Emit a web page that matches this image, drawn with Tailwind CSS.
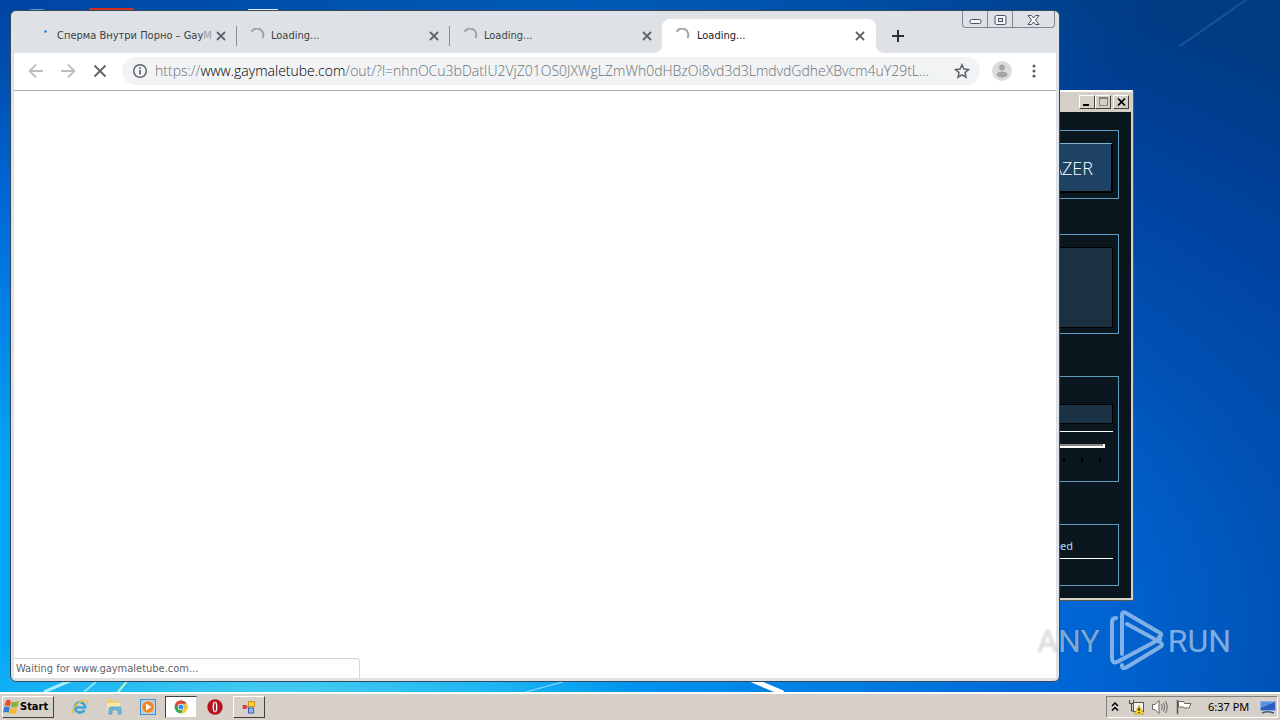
<!DOCTYPE html>
<html lang="en">
<head>
    <meta charset="UTF-8">
    <meta name="viewport" content="width=device-width, initial-scale=1.0">
    <title>Desktop</title>
    <script src="https://cdn.jsdelivr.net/npm/@tailwindcss/browser@4"></script>
</head>
<body class="h-screen overflow-hidden flex flex-col font-['Noto_Sans','Open_Sans',sans-serif] text-[11px] leading-4 text-black">

    <!-- Desktop -->
    <div class="relative flex-1 overflow-hidden bg-[radial-gradient(ellipse_28%_14%_at_22%_102%,#4fd2f0_0%,#30c0f0cc_50%,transparent_100%),radial-gradient(ellipse_45%_30%_at_45%_0%,#005cb8_0%,transparent_100%),radial-gradient(ellipse_130%_110%_at_10%_90%,#00a8f8_0%,#00a4f5_23%,#0080e4_42%,#0066d6_57%,#0052b4_70%,#0042a0_84%,#003c84_100%)]">
        <svg class="absolute inset-0 w-full h-full" viewBox="0 0 1280 692" preserveAspectRatio="none" aria-hidden="true">
            <ellipse cx="37" cy="13" rx="14" ry="4" fill="#7fa6d8"/>
            <rect x="89" y="8" width="45" height="8" fill="#d0301c"/>
            <rect x="248" y="9" width="30" height="6" fill="#e8eef8"/>
            <path d="M1180 46 1246 0" stroke="#3a78b8" stroke-width="2" opacity=".4"/>
            <path d="M44 692 72 680" stroke="#a8ecff" stroke-width="3"/>
            <path d="M84 692 98 680" stroke="#8ce4f8" stroke-width="2"/>
            <path d="M118 692 128 680" stroke="#b8f4c8" stroke-width="2"/>
            <path d="M526 692 566 681" stroke="#9fdcff" stroke-width="1"/>
            <path d="M752 680 783 693" stroke="#fff" stroke-width="5"/>
        </svg>

        <!-- Background app -->
        <section class="absolute top-[90px] right-[147px] w-[420px] border-2 border-t-white border-l-white border-r-[#d8d0c4] border-b-[#d8d0c4] bg-[#d4d0c8] shadow-[1px_1px_0_#5a5650]">
            <header class="flex items-center justify-end h-5 pr-[2px] pb-px">
                <button aria-label="Minimize" class="w-4 h-[14px] border border-t-white border-l-white border-r-[#404040] border-b-[#404040] flex items-end pl-[3px] pb-[2px]"><span class="w-[6px] h-[2px] bg-black"></span></button>
                <button aria-label="Maximize" class="w-4 h-[14px] border border-t-white border-l-white border-r-[#404040] border-b-[#404040] flex items-center justify-center"><span class="w-[9px] h-[9px] border border-t-2 border-[#85817a]"></span></button>
                <button aria-label="Close" class="w-4 h-[14px] ml-[2px] border border-t-white border-l-white border-r-[#404040] border-b-[#404040] flex items-center justify-center">
                    <svg width="9" height="8" viewBox="0 0 9 8"><path d="M1 .5 8 7.500M8 .5 1 7.500" stroke="#000" stroke-width="1.700"/></svg>
                </button>
            </header>
            <div class="bg-[#0b171e] pt-[18px] pr-3 pb-3">
                <div class="border border-[#5f9cc0] h-[69px] pt-3 pr-[5px] mb-[35px]">
                    <button class="block w-full h-[50px] bg-[#1e4263] border border-t-[#7fb4d4] border-r-2 border-b-2 border-r-black border-b-black text-right pr-[18px] text-[18px] font-light text-white font-['Open_Sans',sans-serif]">LAZER</button>
                </div>
                <div class="border border-[#5f9cc0] h-[100px] pt-3 pr-[5px] mb-[42px]">
                    <div class="h-[81px] bg-[#1b3040] border border-black"></div>
                </div>
                <div class="border border-[#5f9cc0] h-[106px] pt-[27px] pr-[5px] mb-[42px]">
                    <div class="h-5 bg-[#1a3244] border border-black"></div>
                    <div class="h-px bg-white mt-[7px]"></div>
                    <div class="h-1 mr-2 mt-3 bg-[#8a857e] border-b-2 border-r-2 border-white"></div>
                    <div class="flex justify-end gap-4 pr-3 mt-[10px]">
                        <span class="w-[2px] h-1 bg-black"></span>
                        <span class="w-[2px] h-1 bg-black"></span>
                        <span class="w-[2px] h-1 bg-black"></span>
                    </div>
                </div>
                <div class="border border-[#5f9cc0] h-[62px] pt-[13px] pr-[5px]">
                    <p class="text-right pr-10 text-[#b4dcec]">ed</p>
                    <div class="h-px bg-white mt-1"></div>
                </div>
            </div>
        </section>

        <!-- Browser -->
        <main class="absolute top-[10px] left-[10px] right-[220px] bottom-[10px] flex flex-col rounded-md border border-[#34485c] bg-[#dee1e6] px-[3px] pb-[3px] overflow-hidden">
            <div class="flex h-[42px] pl-[9px] shrink-0 font-['DejaVu_Sans_Condensed','DejaVu_Sans',sans-serif] text-[11px]">
                <div class="flex items-center w-[213px] mt-2 pl-3 pr-[7px]">
                    <svg class="w-4 h-4 shrink-0" viewBox="0 0 16 16"><circle cx="10.500" cy="3.500" r="1.200" fill="#1a73e8"/></svg>
                    <span class="flex-1 ml-[6px] whitespace-nowrap text-[#3c4043]">Сперма Внутри Порно – Gay<span class="text-[#9a9da3]">M</span></span>
                    <button aria-label="Close tab"><svg class="w-4 h-4" viewBox="0 0 16 16"><path d="m4 4 8 8M12 4l-8 8" stroke="#5f6368" stroke-width="1.800"/></svg></button>
                </div>
                <div class="self-center h-5 w-px mt-2 bg-[#8b8f94]"></div>
                <div class="flex items-center w-[212px] mt-2 pl-3 pr-[7px]">
                    <svg class="w-4 h-4 shrink-0" viewBox="0 0 16 16"><path d="M2.500 3.700A6 6 0 0 1 13.500 10" fill="none" stroke="#a0a4aa" stroke-width="2"/></svg>
                    <span class="flex-1 ml-[6px] text-[#3c4043]">Loading...</span>
                    <button aria-label="Close tab"><svg class="w-4 h-4" viewBox="0 0 16 16"><path d="m4 4 8 8M12 4l-8 8" stroke="#5f6368" stroke-width="1.800"/></svg></button>
                </div>
                <div class="self-center h-5 w-px mt-2 bg-[#8b8f94]"></div>
                <div class="flex items-center w-[212px] mt-2 pl-3 pr-[7px]">
                    <svg class="w-4 h-4 shrink-0" viewBox="0 0 16 16"><path d="M2.500 3.700A6 6 0 0 1 13.500 10" fill="none" stroke="#a0a4aa" stroke-width="2"/></svg>
                    <span class="flex-1 ml-[6px] text-[#3c4043]">Loading...</span>
                    <button aria-label="Close tab"><svg class="w-4 h-4" viewBox="0 0 16 16"><path d="m4 4 8 8M12 4l-8 8" stroke="#5f6368" stroke-width="1.800"/></svg></button>
                </div>
                <div class="relative flex items-center w-[214px] mt-2 pl-3 pr-2 rounded-t-lg bg-white">
                    <svg class="absolute -left-2 bottom-0 w-2 h-2" viewBox="0 0 8 8"><path d="M8 0v8H0a8 8 0 0 0 8-8" fill="#fff"/></svg>
                    <svg class="absolute -right-2 bottom-0 w-2 h-2" viewBox="0 0 8 8"><path d="M0 0v8h8a8 8 0 0 1-8-8" fill="#fff"/></svg>
                    <svg class="w-4 h-4 shrink-0" viewBox="0 0 16 16"><path d="M2.500 3.700A6 6 0 0 1 13.500 10" fill="none" stroke="#a0a4aa" stroke-width="2"/></svg>
                    <span class="flex-1 ml-[7px] text-[#202124]">Loading...</span>
                    <button aria-label="Close tab"><svg class="w-4 h-4" viewBox="0 0 16 16"><path d="m4 4 8 8M12 4l-8 8" stroke="#5f6368" stroke-width="1.800"/></svg></button>
                </div>
                <button aria-label="New tab" class="mt-2 ml-[14px]"><svg class="w-4 h-4" viewBox="0 0 16 16"><path d="M8 2v12M2 8h12" stroke="#2d3034" stroke-width="2"/></svg></button>
                <div class="ml-auto mr-px flex h-[17px] w-[93px] border border-t-0 border-[#7f8793] rounded-b divide-x divide-[#7f8793]">
                    <button aria-label="Minimize" class="w-[25px] flex items-center justify-center"><svg width="13" height="15" viewBox="0 0 13 15"><rect x="1" y="7.500" width="11" height="4" rx="1.500" fill="#f4f5f7" stroke="#4a5060"/></svg></button>
                    <button aria-label="Restore" class="w-[25px] flex items-center justify-center"><svg width="13" height="15" viewBox="0 0 13 15"><rect x="1" y="3.500" width="11" height="9" rx="1.500" fill="#f4f5f7" stroke="#4a5060"/><rect x="4.500" y="6.500" width="4" height="3" fill="#dee1e6" stroke="#4a5060"/></svg></button>
                    <button aria-label="Close" class="flex-1 flex items-center justify-center"><svg width="13" height="15" viewBox="0 0 13 15"><path d="M1 3.500h3.500l2 2.500 2-2.500H12L8.500 8l3.500 4.500H8.500l-2-2.500-2 2.500H1L4.500 8z" fill="#f4f5f7" stroke="#4a5060"/></svg></button>
                </div>
            </div>

            <div class="flex items-center h-[38px] shrink-0 px-[14px] pb-px bg-white border-b border-[#a8aaad]">
                <button aria-label="Back"><svg class="w-4 h-4" viewBox="0 0 16 16"><path d="M15 8H2M8 1.500 1.700 8 8 14.500" fill="none" stroke="#babcbe" stroke-width="1.800"/></svg></button>
                <button aria-label="Forward" class="ml-4"><svg class="w-4 h-4" viewBox="0 0 16 16"><path d="M1 8h13M8 1.500 14.300 8 8 14.500" fill="none" stroke="#babcbe" stroke-width="1.800"/></svg></button>
                <button aria-label="Stop" class="ml-4"><svg class="w-4 h-4" viewBox="0 0 16 16"><path d="m2.500 2.500 11 11M13.500 2.500l-11 11" stroke="#5f6368" stroke-width="1.800"/></svg></button>
                <div class="flex flex-1 min-w-0 items-center h-7 ml-[14px] pl-[10px] pr-[10px] rounded-full bg-[#f1f3f4]">
                    <svg class="w-4 h-4 shrink-0" viewBox="0 0 16 16"><circle cx="8" cy="8" r="6.300" fill="none" stroke="#5f6368" stroke-width="1.500"/><path d="M8 7v4.500M8 4.200v1.700" stroke="#5f6368" stroke-width="1.700"/></svg>
                    <div class="flex-1 ml-[7px] overflow-hidden whitespace-nowrap text-[14px] leading-5 font-light text-[#6b7075] font-['Open_Sans','Noto_Sans',sans-serif]">https://<span class="text-black">www.gaymaletube.com</span>/out/?l=nhnOCu3bDatIU2VjZ01OS0JXWgLZmWh0dHBzOi8vd3d3LmdvdGdheXBvcm4uY29tL...</div>
                    <button aria-label="Bookmark"><svg class="w-4 h-4" viewBox="0 0 16 16"><path d="m8 1.800 1.900 4.300 4.600.4-3.500 3.100 1 4.600L8 11.800l-4 2.400 1-4.600L1.500 6.500l4.600-.4z" fill="none" stroke="#5f6368" stroke-width="1.500"/></svg></button>
                </div>
                <button aria-label="Profile" class="ml-3"><svg class="w-5 h-5" viewBox="0 0 20 20"><circle cx="10" cy="10" r="10" fill="#dcdcdc"/><circle cx="10" cy="6.500" r="2.900" fill="#a4a4a4"/><ellipse cx="10" cy="13.500" rx="5.500" ry="2.900" fill="#a4a4a4"/></svg></button>
                <button aria-label="Menu" class="ml-[14px]"><svg class="w-4 h-4" viewBox="0 0 16 16" fill="#5f6368"><circle cx="8" cy="3" r="1.600"/><circle cx="8" cy="8" r="1.600"/><circle cx="8" cy="13" r="1.600"/></svg></button>
            </div>

            <div class="flex-1 flex items-end bg-white">
                <div class="w-[346px] h-5 pt-px pl-[2px] border-t border-r border-[#d4d6d9] rounded-tr text-[#5f6368] leading-[18px] text-[11px] font-['DejaVu_Sans_Condensed','DejaVu_Sans',sans-serif]">Waiting for www.gaymaletube.com...</div>
            </div>
        </main>
    </div>

    <!-- Taskbar -->
    <footer class="flex items-center h-7 shrink-0 border-t-2 border-white bg-[#d6d0c8] px-[2px] text-[11px]">
        <button class="flex items-center gap-px h-[22px] w-[52px] border border-t-white border-l-white border-r-[#404040] border-b-[#404040] font-bold font-['DejaVu_Sans_Condensed','DejaVu_Sans',sans-serif]">
            <svg class="w-4 h-4 shrink-0" viewBox="0 0 16 16">
                <path d="M3 1.500Q5.500 0 8 2L7 7.500Q4.500 6 1.500 7z" fill="#e8502c"/>
                <path d="M8.800 2.500Q11.500 4 16 2l-1.600 5.500Q11 9.500 7.800 8z" fill="#84b83c"/>
                <path d="M1.300 8Q4.500 6.800 6.800 8.500L5.600 14Q3.500 12.200 0 13.700z" fill="#3c7ccc"/>
                <path d="M7.600 9q3 1.500 6.600-.4L12.700 14q-3 2-6.400.3z" fill="#f4b82c"/>
            </svg>
            Start
        </button>
        <nav class="flex items-center ml-[9px]">
            <button aria-label="Internet Explorer" class="w-[34px] flex justify-center">
                <svg class="w-[18px] h-[18px]" viewBox="0 0 18 18"><path d="M4.500 9.500h9.700A5.200 5.200 0 1 0 13.500 12" fill="none" stroke="#3ca4dc" stroke-width="2.600"/><path d="M2.500 15.500C-.5 12.500 6 4.500 12 2.500c3-1 5 0 4 3" fill="none" stroke="#f0c040" stroke-width="1.400"/></svg>
            </button>
            <button aria-label="Explorer" class="w-[34px] flex justify-center">
                <svg class="w-[18px] h-[18px]" viewBox="0 0 18 18"><path d="M2 1h5l1 2h6v9H2z" fill="#ecd078"/><path d="M2 5h13v8H2z" fill="#f8e8a4"/><path d="M4 16v-5q0-2 2-2h8q2 0 2 2v5h-3v-4H7v4z" fill="#6cb8e4" stroke="#4890c4" stroke-width=".7"/></svg>
            </button>
            <button aria-label="Media Player" class="w-[34px] flex justify-center">
                <svg class="w-4 h-4" viewBox="0 0 16 16"><rect x=".5" y=".5" width="15" height="15" fill="#a8d0f0" stroke="#4c8cc8"/><circle cx="8" cy="8" r="6.200" fill="#f08420" stroke="#fff" stroke-width=".5"/><path d="M6 4.500v7L11.500 8z" fill="#fff"/></svg>
            </button>
            <button aria-label="Chrome" class="w-8 h-[22px] flex items-center justify-center bg-white border border-t-[#404040] border-l-[#404040] border-r-[#d4d0c8] border-b-[#d4d0c8]">
                <svg class="w-[14px] h-[14px]" viewBox="0 0 14 14"><circle cx="7" cy="7" r="6.500" fill="#3ca852"/><path d="M1.400 3.700A6.500 6.500 0 0 1 12.600 3.700H7A3.300 3.300 0 0 0 4 8.500z" fill="#e04434"/><path d="M12.700 3.700A6.500 6.500 0 0 1 6.500 13.500L10 8.500A3.300 3.300 0 0 0 9 3.700z" fill="#fccc34"/><circle cx="7" cy="7" r="3.200" fill="#fff"/><circle cx="7" cy="7" r="2.500" fill="#4484f0"/></svg>
            </button>
            <button aria-label="Opera" class="w-[36px] flex justify-center">
                <svg class="w-4 h-4" viewBox="0 0 16 16"><circle cx="8" cy="8" r="7.700" fill="#b81420"/><ellipse cx="8" cy="8" rx="2.400" ry="5.300" fill="#fff"/><ellipse cx="8" cy="8" rx=".9" ry="4.600" fill="#901018"/></svg>
            </button>
            <button aria-label="App" class="w-8 h-[22px] flex items-center justify-center border border-t-white border-l-white border-r-[#404040] border-b-[#404040]">
                <svg class="w-[14px] h-[14px]" viewBox="0 0 14 14"><rect x="6.500" y="1.500" width="6" height="5" fill="#fcd034" stroke="#c89820"/><rect x=".7" y="5" width="4" height="4" fill="#e03c28"/><rect x="6.500" y="8" width="5" height="5" fill="#90b8f4" stroke="#3860c0"/><path d="M5 7h1.500" stroke="#555"/></svg>
            </button>
        </nav>
        <div class="ml-auto flex items-center h-[22px] w-[172px] border border-t-[#808080] border-l-[#808080] border-r-white border-b-white pl-1">
            <button aria-label="Show hidden icons"><svg width="8" height="12" viewBox="0 0 8 12"><path d="M1 5 4 2l3 3M1 9.500l3-3 3 3" fill="none" stroke="#000" stroke-width="1.500"/></svg></button>
            <svg class="w-4 h-4 ml-[9px]" viewBox="0 0 16 16"><path d="M1.500 1v3.500h4V1M3.500 4.500V12H6" fill="none" stroke="#444"/><rect x="5.500" y="3.500" width="10" height="9" fill="#f4f4f4" stroke="#555"/><path d="M11 6.500 15.800 15H6.200z" fill="#fcd820" stroke="#b89810" stroke-width=".7"/><path d="M11 9v3M11 13v1" stroke="#000" stroke-width="1.200"/></svg>
            <svg class="w-4 h-4 ml-2" viewBox="0 0 16 16" fill="#fff" stroke="#666"><path d="M.5 5.500H3L7 1.500v13L3 10.500H.5z"/><path d="M9.500 5q1.600 3 0 6M11.500 3.500q2.500 4.500 0 9M13.500 2q3.500 6 0 12" fill="none"/></svg>
            <svg class="w-4 h-4 ml-2" viewBox="0 0 16 16"><path d="M1.500 1v14" stroke="#555" stroke-width="1.500"/><path d="M2.500 2.500h5l1 2H15L13 9H8L7 8H2.500z" fill="#fff" stroke="#666"/></svg>
            <time class="ml-4">6:37 PM</time>
            <svg class="w-4 h-4 ml-auto mr-[1px]" viewBox="0 0 16 16"><path d="M.5 2.500h15v9H.5z" fill="#2c5cc0" stroke="#8cb0e0"/><path d="M1 3h14L1 9z" fill="#5c90e0"/><path d="M2 14q6-2.500 12 0" stroke="#405880" stroke-width="1.500" fill="none"/></svg>
        </div>
    </footer>

    <!-- Watermark -->
    <div class="absolute right-[49px] bottom-[47px] flex items-center gap-1 text-[32px] leading-[64px] font-['Roboto','Liberation_Sans',sans-serif] text-white/50 pointer-events-none">
        <span class="mr-[6px] [text-shadow:0_0_2px_#0004]">ANY</span>
        <svg class="w-[54px] h-[62px]" viewBox="0 0 54 62" fill="none" stroke="currentColor" stroke-width="4" stroke-linejoin="round" stroke-linecap="round">
            <path d="M6 8Q2 8 2 12V48Q2 54 7 52L50 29M12 44V5Q12 1 16 3L50 23Q53 25 49 27M17 14 50 32Q54 35 50 37L17 57Q12 60 12 55"/>
        </svg>
        <span>RUN</span>
    </div>
</body>
</html>
